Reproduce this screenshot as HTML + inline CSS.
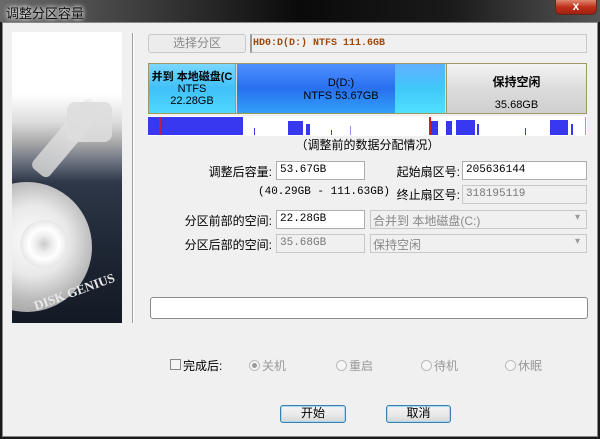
<!DOCTYPE html>
<html><head><meta charset="utf-8"><style>
*{margin:0;padding:0;box-sizing:border-box}
body{width:600px;height:439px;overflow:hidden;background:#1a1a1a;font-family:"Liberation Sans","Noto Sans CJK SC",sans-serif;font-size:12px;color:#000;position:relative}
.a{position:absolute}
.title{left:0;top:0;width:600px;height:22px;background:linear-gradient(90deg,#6a6a6a 0,#3a3a3a 25%,#0a0a0a 50%,#1a1a1a 75%,#555 100%)}
.ttext{left:6px;top:3px;color:#111;font-size:13px;text-shadow:0 0 6px #fff,0 0 4px #fff}
.close{left:555px;top:0;width:42px;height:15px;border:1px solid #5a2a20;border-top:none;border-radius:0 0 5px 5px;background:linear-gradient(#e08870,#c0301a 50%,#a02010);color:#fff;font-weight:bold;text-align:center;font-size:12px;line-height:13px}
.body{left:2px;top:22px;width:596px;height:415px;background:#f0f0f0;border:1px solid #888}
.inp{background:#fff;border:1px solid #abadb3;font-family:"Liberation Mono","Noto Sans CJK SC",monospace;font-size:11px;padding:2px 3px;height:19px}
.dis{background:#f0f0f0;color:#777;border-color:#c8c8c8}
.sel{background:#f0f0f0;border:1px solid #c8c8c8;color:#888;height:19px;padding:1px 2px;font-size:12px}
.sel:after{content:"▾";position:absolute;right:6px;top:1px;color:#999;font-size:10px}
.lbl{text-align:right;font-size:12px}
.btn{border:1px solid #3c7fb1;border-radius:3px;background:linear-gradient(#f2f2f2,#ebebeb 50%,#d6d6d6);text-align:center;line-height:15px;height:18px;font-size:12px;box-shadow:inset 0 0 0 1px #a8d8f0}
.blk{background:#3838f0;top:117px;height:18px}
.radio{width:11px;height:11px;border:1px solid #bbb;border-radius:50%;background:#f6f6f6}
.g{color:#999}
</style></head><body>
<div class="a title"></div>
<div class="a ttext">调整分区容量</div>
<div class="a close">x</div>
<div class="a body"></div>
<!-- left image -->
<div class="a" style="left:12px;top:32px;width:110px;height:291px;background:linear-gradient(#fff 0,#fff 62px,#ddd 90px,#aaa 110px,#6a7280 130px,#2e3848 150px,#1e2634 220px,#141a24 291px);overflow:hidden">
 <div class="a" style="left:-50px;top:150px;width:130px;height:130px;border-radius:50%;background:radial-gradient(circle at 55% 45%,#fff 0,#e8e8e8 35%,#b8b8b8 60%,#8a8a8a 100%)"></div>
 <div class="a" style="left:10px;top:95px;width:90px;height:22px;background:linear-gradient(90deg,#ccc,#eee);transform:rotate(-50deg);border-radius:6px;opacity:.9"></div>
 <div class="a" style="left:55px;top:70px;width:45px;height:40px;background:#ddd;border-radius:8px;opacity:.9"></div>
 <div class="a" style="left:8px;top:188px;width:48px;height:48px;border-radius:50%;background:radial-gradient(#ccc 0,#eee 25%,#fff 45%,#ddd 80%,#999 100%)"></div>
 <div class="a" style="left:20px;top:252px;color:#e8e8e8;font-weight:bold;font-size:13px;transform:rotate(-20deg);white-space:nowrap;font-family:'Liberation Serif',serif">DISK GENIUS</div>
</div>
<div class="a" style="left:132px;top:33px;width:1px;height:290px;background:#a0a0a0"></div>
<div class="a" style="left:133px;top:33px;width:1px;height:290px;background:#fff"></div>
<!-- top -->
<div class="a" style="left:148px;top:34px;width:98px;height:19px;border:1px solid #c8c8c8;border-radius:3px;background:#ececec;color:#888;text-align:center;line-height:17px;font-size:12px">选择分区</div>
<div class="a" style="left:250px;top:34px;width:337px;height:19px;border:1px solid #c8c8c8;border-left:2px solid #999;background:#f0f0f0;color:#a04808;font-family:'Liberation Mono',monospace;font-weight:bold;font-size:10px;line-height:17px;padding-left:1px">HD0:D(D:) NTFS 111.6GB</div>
<!-- partition bar -->
<div class="a" style="left:148px;top:63px;width:439px;height:51px;border:1px solid #a09860;background:#ddd"></div>
<div class="a" style="left:149px;top:64px;width:87px;height:49px;background:linear-gradient(#7ad8ff,#40c0f8 50%,#50d8ff);border-right:1px solid #a09860;text-align:center;font-size:11px;line-height:12px;font-weight:bold;overflow:hidden;white-space:nowrap;padding-top:7px">并到 本地磁盘(C<br><span style="font-weight:normal">NTFS</span><br><span style="font-weight:normal">22.28GB</span></div>
<div class="a" style="left:237px;top:64px;width:158px;height:49px;background:linear-gradient(#5090ff,#2870f0 50%,#30a0f8)"></div>
<div class="a" style="left:395px;top:64px;width:50px;height:49px;background:linear-gradient(#60b0ff,#40c8f8 50%,#50e0ff)"></div>
<div class="a" style="left:237px;top:77px;width:208px;text-align:center;font-size:11px;line-height:13px">D(D:)<br>NTFS 53.67GB</div>
<div class="a" style="left:446px;top:64px;width:140px;height:49px;background:linear-gradient(#f4f4f4,#dcdcdc 50%,#cfcfcf);border-left:1px solid #a09860;text-align:center;font-size:12px;font-weight:bold;padding-top:7px;line-height:22px">保持空闲<br><span style="font-size:11px;font-weight:normal">35.68GB</span></div>
<!-- data bar -->
<div class="a" style="left:148px;top:116px;width:439px;height:20px;background:#fff"></div>
<div class="a blk" style="left:148px;width:95px"></div>
<div class="a" style="left:159px;top:117px;width:2px;height:18px;background:#c02040"></div>
<div class="a blk" style="left:254px;width:1px;top:128px;height:7px"></div>
<div class="a blk" style="left:288px;width:15px;top:121px;height:14px"></div>
<div class="a blk" style="left:306px;width:4px;top:124px;height:11px"></div>
<div class="a blk" style="left:331px;width:1px;top:130px;height:5px"></div>
<div class="a blk" style="left:350px;width:1px;top:126px;height:9px;background:#9090f0"></div>
<div class="a" style="left:429px;top:117px;width:2px;height:18px;background:#d02020"></div>
<div class="a blk" style="left:431px;width:7px;top:121px;height:14px"></div>
<div class="a blk" style="left:446px;width:6px;top:121px;height:14px"></div>
<div class="a blk" style="left:456px;width:19px;top:120px;height:15px"></div>
<div class="a blk" style="left:477px;width:2px;top:124px;height:11px"></div>
<div class="a blk" style="left:525px;width:1px;top:128px;height:7px"></div>
<div class="a blk" style="left:550px;width:18px;top:120px;height:15px"></div>
<div class="a blk" style="left:571px;width:2px;top:124px;height:11px"></div>
<div class="a" style="left:585px;top:117px;width:1px;height:18px;background:#d080d0"></div>
<div class="a" style="left:148px;top:136px;width:439px;text-align:center;font-size:12px">（调整前的数据分配情况）</div>
<!-- fields -->
<div class="a lbl" style="left:160px;top:163px;width:112px">调整后容量:</div>
<div class="a inp" style="left:276px;top:161px;width:89px">53.67GB</div>
<div class="a lbl" style="left:380px;top:163px;width:80px">起始扇区号:</div>
<div class="a inp" style="left:462px;top:161px;width:125px">205636144</div>
<div class="a" style="left:258px;top:186px;font-family:'Liberation Mono',monospace;font-size:11px">(40.29GB - 111.63GB)</div>
<div class="a lbl" style="left:380px;top:186px;width:80px">终止扇区号:</div>
<div class="a inp dis" style="left:462px;top:185px;width:125px">318195119</div>
<div class="a lbl" style="left:160px;top:212px;width:112px">分区前部的空间:</div>
<div class="a inp" style="left:276px;top:210px;width:89px">22.28GB</div>
<div class="a sel" style="left:370px;top:210px;width:217px">合并到 本地磁盘(C:)</div>
<div class="a lbl" style="left:160px;top:236px;width:112px">分区后部的空间:</div>
<div class="a inp dis" style="left:276px;top:234px;width:89px">35.68GB</div>
<div class="a sel" style="left:370px;top:234px;width:217px">保持空闲</div>
<div class="a" style="left:150px;top:297px;width:438px;height:22px;border:1px solid #8a8a8a;border-radius:3px;background:#fff"></div>
<!-- bottom -->
<div class="a" style="left:170px;top:359px;width:11px;height:11px;border:1px solid #888;background:#f4f4f4"></div>
<div class="a" style="left:183px;top:357px;font-size:12px">完成后:</div>
<div class="a radio" style="left:249px;top:360px"><div class="a" style="left:2px;top:2px;width:5px;height:5px;border-radius:50%;background:#999"></div></div>
<div class="a g" style="left:262px;top:357px">关机</div>
<div class="a radio" style="left:336px;top:360px"></div>
<div class="a g" style="left:349px;top:357px">重启</div>
<div class="a radio" style="left:421px;top:360px"></div>
<div class="a g" style="left:434px;top:357px">待机</div>
<div class="a radio" style="left:505px;top:360px"></div>
<div class="a g" style="left:518px;top:357px">休眠</div>
<div class="a btn" style="left:280px;top:405px;width:66px">开始</div>
<div class="a btn" style="left:386px;top:405px;width:65px">取消</div>
</body></html>
